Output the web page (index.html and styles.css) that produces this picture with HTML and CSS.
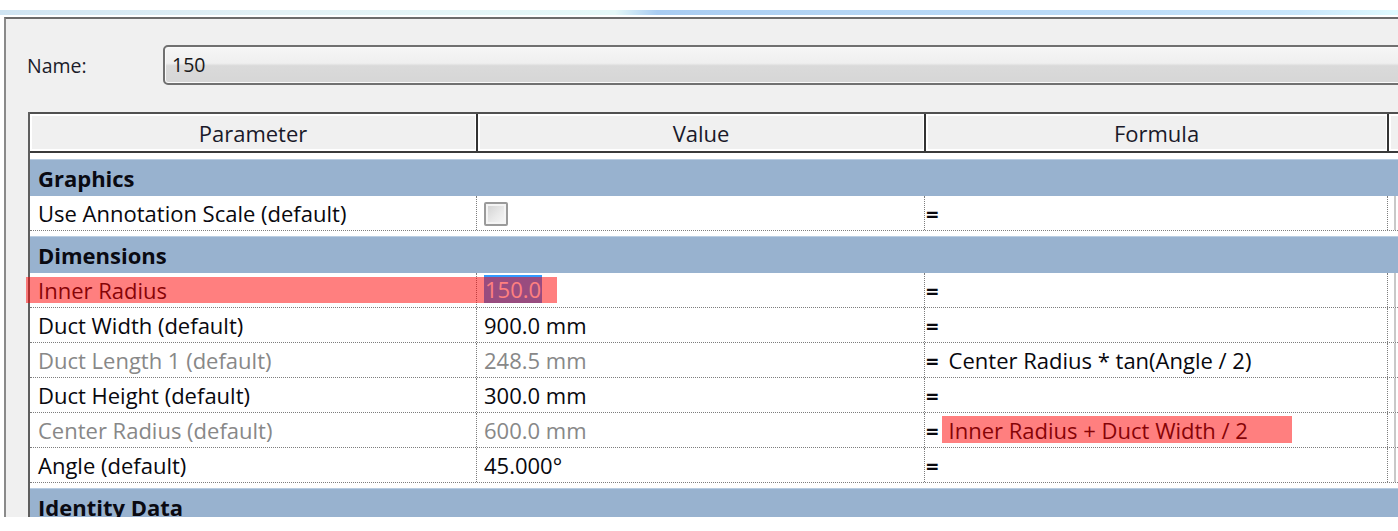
FILE: index.html
```html
<!DOCTYPE html>
<html>
<head>
<meta charset="utf-8">
<link rel="stylesheet" href="styles.css">
</head>
<body>
<div class="glow"></div>
<div class="window">
  <div class="name-row">
    <span class="name-label">Name:</span>
    <div class="name-input">150</div>
  </div>
  <div class="table">
    <div class="head">
      <div class="hcell">Parameter</div>
      <div class="hcell">Value</div>
      <div class="hcell">Formula</div>
      <div class="hcell"></div>
    </div>
    <div class="body">
      <div class="band">Graphics</div>
      <div class="row">
        <div class="cell">Use Annotation Scale (default)</div>
        <div class="cell val"><span class="checkbox"></span></div>
        <div class="cell fx">=</div>
        <div class="cell last"></div>
      </div>
      <div class="band">Dimensions</div>
      <div class="row">
        <div class="cell">Inner Radius</div>
        <div class="cell val"><span class="selection">150.0</span></div>
        <div class="cell fx">=</div>
        <div class="cell last"></div>
        <div class="mark mark-row"></div>
      </div>
      <div class="row">
        <div class="cell">Duct Width (default)</div>
        <div class="cell val">900.0 mm</div>
        <div class="cell fx">=</div>
        <div class="cell last"></div>
      </div>
      <div class="row muted">
        <div class="cell">Duct Length 1 (default)</div>
        <div class="cell val">248.5 mm</div>
        <div class="cell fx">=<span class="formula">Center Radius * tan(Angle / 2)</span></div>
        <div class="cell last"></div>
      </div>
      <div class="row">
        <div class="cell">Duct Height (default)</div>
        <div class="cell val">300.0 mm</div>
        <div class="cell fx">=</div>
        <div class="cell last"></div>
      </div>
      <div class="row muted">
        <div class="cell">Center Radius (default)</div>
        <div class="cell val">600.0 mm</div>
        <div class="cell fx">=<span class="formula">Inner Radius + Duct Width / 2</span></div>
        <div class="cell last"></div>
        <div class="mark mark-formula"></div>
      </div>
      <div class="row">
        <div class="cell">Angle (default)</div>
        <div class="cell val">45.000°</div>
        <div class="cell fx">=</div>
        <div class="cell last"></div>
      </div>
      <div class="band">Identity Data</div>
    </div>
  </div>
</div>
</body>
</html>
```
FILE: styles.css
```css
html, body {
  margin: 0;
  padding: 0;
  background: #ffffff;
  overflow: hidden;
  width: 1398px;
  height: 531px;
}
body {
  font-family: "Open Sans", "Noto Sans", sans-serif;
  color: #08080e;
}
.glow {
  height: 5px;
  margin-top: 10px;
  background: linear-gradient(90deg, #cfe4f2 0%, #e2f1f5 20%, #e4f8f8 44%, #a8ccf2 47%, #b4d5f4 60%, #bcdcf8 80%, #c8e6fb 93%, #e0fbff 100%);
}
.window {
  margin-top: 2px;
  margin-left: 4px;
  width: 1430px;
  height: 498px;
  overflow: hidden;
  background: #f0f0f0;
  border-left: 2px solid #8a8a8a;
  border-top: 2px solid #6c6c6c;
}
.name-row {
  display: flex;
  align-items: center;
  padding-top: 26px;
  padding-left: 21px;
  height: 40px;
}
.name-label {
  width: 136px;
  font-size: 19.5px;
  color: #1c1c2a;
}
.name-input {
  flex: 1;
  height: 36px;
  line-height: 36px;
  border: 2px solid #707070;
  border-radius: 5px;
  padding-left: 7px;
  font-size: 19.5px;
  color: #181818;
  background: linear-gradient(180deg, #f6f6f6 0%, #efefef 45%, #dadada 52%, #d6d6d6 100%);
  box-shadow: inset 0 0 0 1px #fafafa;
}
.table {
  margin-top: 27px;
  margin-left: 22px;
  width: 1420px;
  border-left: 2px solid #5e5e5e;
  background: #ffffff;
  height: 420px;
}
.head {
  display: grid;
  grid-template-columns: 448px 448px 463px 1fr;
  height: 37px;
  border-top: 2px solid #505050;
  border-bottom: 2px solid #3a3a3a;
  background: #f0f0f0;
}
.hcell {
  display: flex;
  align-items: center;
  justify-content: center;
  font-size: 22px;
  color: #1a1a2a;
  border-right: 2px solid #333333;
  box-shadow: inset 2px 2px 0 #ffffff, inset -1px -2px 0 #ffffff;
}
.body {
  padding-top: 2px;
}
.band {
  margin-top: 5px;
  height: 36px;
  line-height: 36px;
  padding-left: 8px;
  background: #98b2cf;
  border-top: 1px solid #b9cde2;
  font-size: 22px;
  font-weight: 700;
  color: #0a0a12;
  white-space: nowrap;
}
.body > .band:first-child {
  margin-top: 4px;
}
.row {
  position: relative;
  display: grid;
  grid-template-columns: 447px 448px 463px 1fr;
  height: 34px;
  border-bottom: 1px dotted #7d7d7d;
  font-size: 22px;
}
.cell {
  display: flex;
  align-items: center;
  padding-left: 8px;
  border-right: 1px dotted #7d7d7d;
  white-space: nowrap;
}
.cell.val {
  padding-left: 7px;
}
.cell.fx {
  padding-left: 1px;
  font-weight: 700;
}
.cell.last {
  border-right: none;
  box-shadow: inset 6px 0 0 #ffffff, inset 8px 0 0 #c8c8c8;
}
.formula {
  font-weight: 400;
  margin-left: 10px;
  color: #08080e;
}
.row.muted .cell:nth-child(1),
.row.muted .cell:nth-child(2) {
  color: #888888;
}
.checkbox {
  display: inline-block;
  width: 20px;
  height: 20px;
  margin-top: 2px;
  border: 2px solid #9a9a9a;
  border-radius: 2px;
  background: linear-gradient(135deg, #cfcfcf 0%, #e9e9e9 55%, #f8f8f8 100%);
  box-shadow: inset 0 0 0 2px #f4f4f4;
}
.selection {
  display: inline-block;
  align-self: flex-start;
  margin-top: 2px;
  height: 28px;
  line-height: 28px;
  padding: 0 1px;
  background: #3399ff;
  color: #ffffff;
}
.mark {
  position: absolute;
  background: rgba(255, 0, 0, 0.5);
  pointer-events: none;
}
.mark-row {
  left: -4px;
  top: 4px;
  width: 531px;
  height: 26px;
}
.mark-formula {
  left: 912px;
  top: 3px;
  width: 350px;
  height: 27px;
}
```
